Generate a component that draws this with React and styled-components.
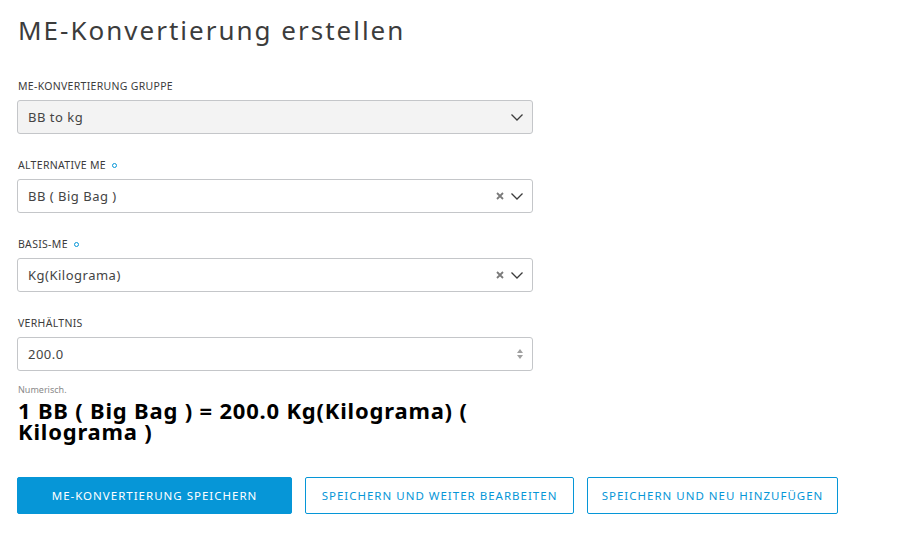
import React from 'react';
import styled, { createGlobalStyle } from 'styled-components';

const GlobalStyle = createGlobalStyle`
  body {
    margin: 0;
    background: #fff;
    font-family: "Noto Sans", "Open Sans", sans-serif;
    color: #3c3c3c;
  }
`;

const Page = styled.div`
  padding: 8px 18px 0 17px;
  width: 516px;
`;

const Title = styled.h1`
  margin: 0 0 27px 1px;
  font-size: 26px;
  line-height: 44px;
  font-weight: 400;
  letter-spacing: 2px;
  color: #3c3c3c;
`;

const Field = styled.div`
  display: flex;
  flex-direction: column;
  margin-bottom: ${({ last }) => (last ? '14px' : '24px')};
`;

const Label = styled.label`
  display: flex;
  align-items: center;
  gap: 6px;
  font-size: 10.5px;
  line-height: 14px;
  letter-spacing: 0.3px;
  text-transform: uppercase;
  color: #3c3c3c;
  margin: 0 0 7px 1px;
`;

const Required = styled.span`
  width: 3px;
  height: 3px;
  border: 1.5px solid #0696d7;
  border-radius: 50%;
`;

const Control = styled.div`
  display: flex;
  align-items: center;
  height: 32px;
  padding: 0 8px 0 10px;
  border: 1px solid #c4c6c9;
  border-radius: 3px;
  background: ${({ disabled }) => (disabled ? '#f3f3f3' : '#fff')};
  font-size: 13px;
  letter-spacing: 0.5px;
  color: #444;
`;

const Value = styled.span`
  flex: 1;
`;

const Icons = styled.span`
  display: flex;
  align-items: center;
  gap: 6px;
`;

const Hint = styled.div`
  font-size: 9px;
  line-height: 10px;
  color: #8a8a8a;
  margin: 0 0 5px 1px;
`;

const Summary = styled.div`
  font-size: 22px;
  font-weight: 700;
  line-height: 21px;
  letter-spacing: 0.8px;
  color: #000;
  margin: 0 0 35px 1px;
  width: 480px;
`;

const Buttons = styled.div`
  display: flex;
  gap: 13px;
  width: 900px;
`;

const Button = styled.button`
  height: 37px;
  padding: 0 ${({ primary }) => (primary ? '30px' : '11px')};
  width: ${({ w }) => w}px;
  border-radius: 2px;
  border: 1px solid #0696d7;
  background: ${({ primary }) => (primary ? '#0696d7' : '#fff')};
  color: ${({ primary }) => (primary ? '#fff' : '#0696d7')};
  font-family: "Noto Sans", sans-serif;
  font-size: 11.5px;
  letter-spacing: 1px;
  text-transform: uppercase;
  white-space: nowrap;
`;

const Chevron = () => (
  <svg width="14" height="14" viewBox="0 0 14 14" fill="none" stroke="#3c3c3c" strokeWidth="1.3">
    <path d="M1.5 4.5 L7 10 L12.5 4.5" />
  </svg>
);

const Clear = () => (
  <svg width="8" height="8" viewBox="0 0 8 8" stroke="#7a7a7a" strokeWidth="1.8">
    <path d="M1 1 L7 7 M7 1 L1 7" />
  </svg>
);

const Spinner = () => (
  <svg width="8" height="14" viewBox="0 0 8 14" fill="#a0a0a0">
    <path d="M4 2 L7 6 H1 Z M4 12 L7 8 H1 Z" />
  </svg>
);

const SelectField = ({ label, value, required, disabled, clearable }) => (
  <Field>
    <Label>
      {label}
      {required && <Required />}
    </Label>
    <Control disabled={disabled}>
      <Value>{value}</Value>
      <Icons>
        {clearable && <Clear />}
        <Chevron />
      </Icons>
    </Control>
  </Field>
);

const App = () => (
  <Page>
    <GlobalStyle />
    <Title>ME-Konvertierung erstellen</Title>
    <SelectField label="ME-Konvertierung Gruppe" value="BB to kg" disabled />
    <SelectField label="Alternative ME" value="BB ( Big Bag )" required clearable />
    <SelectField label="Basis-ME" value="Kg(Kilograma)" required clearable />
    <Field last>
      <Label>Verhältnis</Label>
      <Control>
        <Value>200.0</Value>
        <Icons>
          <Spinner />
        </Icons>
      </Control>
    </Field>
    <Hint>Numerisch.</Hint>
    <Summary>1 BB ( Big Bag ) = 200.0 Kg(Kilograma) ( Kilograma )</Summary>
    <Buttons>
      <Button primary w={275}>ME-Konvertierung speichern</Button>
      <Button w={269}>Speichern und weiter bearbeiten</Button>
      <Button w={251}>Speichern und neu hinzufügen</Button>
    </Buttons>
  </Page>
);

export default App;
